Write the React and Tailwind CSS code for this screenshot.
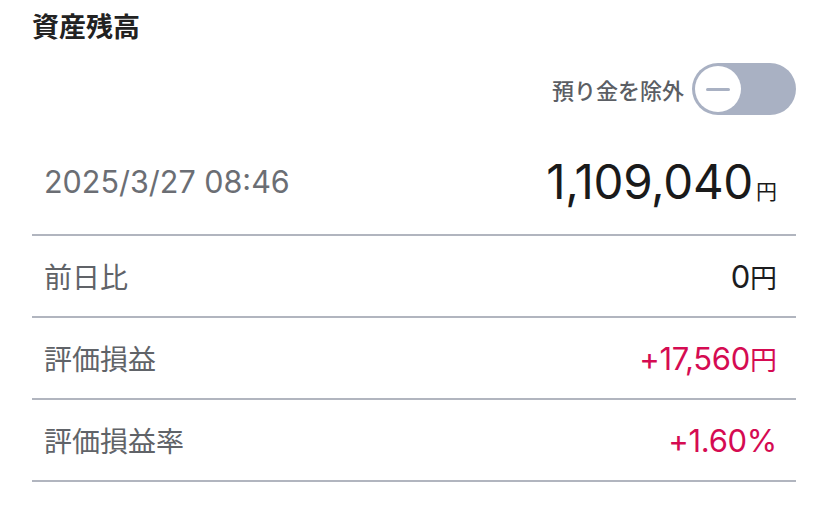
import React from "react";

const FONT = { fontFamily: '"Noto Sans CJK JP", "Noto Sans", sans-serif' };
const NUM = { fontFamily: 'Inter, "Noto Sans CJK JP", sans-serif' };

const rows = [
  { label: "前日比", value: "0", unit: "円", tone: "text-[#1c1c1e]" },
  { label: "評価損益", value: "+17,560", unit: "円", tone: "text-[#d50b52]" },
  { label: "評価損益率", value: "+1.60%", unit: "", tone: "text-[#d50b52]" },
];

function Toggle() {
  return (
    <div className="w-[104px] h-[52px] rounded-full bg-[#a9b1c3] p-[3px] flex items-center">
      <div className="w-[46px] h-[46px] rounded-full bg-white flex items-center justify-center">
        <div className="w-[24px] h-[3px] rounded-full bg-[#a9b1c3]" />
      </div>
    </div>
  );
}

export default function App() {
  return (
    <div className="w-[828px] h-[515px] bg-white px-[32px] overflow-hidden" style={FONT}>
      {/* heading */}
      <div className="h-[50px] flex items-center">
        <h1 className="text-[27px] font-bold leading-none text-[#222]">資産残高</h1>
      </div>

      {/* exclude deposits switch */}
      <div className="mt-[13px] flex items-center justify-end gap-[8px]">
        <span className="text-[22px] font-medium text-[#5b5e64] leading-none">預り金を除外</span>
        <Toggle />
      </div>

      {/* total */}
      <div className="mt-[15px] h-[106px] border-b-2 border-[#b1b5bf] flex items-center justify-between pl-[12px] pr-[19px]">
        <span className="text-[30.5px] text-[#6b6e74] leading-none" style={NUM}>
          2025/3/27 08:46
        </span>
        <span className="flex items-baseline text-[#1a1a1a] leading-none">
          <span className="text-[47.5px] tracking-[-0.3px]" style={NUM}>1,109,040</span>
          <span className="text-[21px] ml-[3px]">円</span>
        </span>
      </div>

      {rows.map((r) => (
        <div
          key={r.label}
          className="h-[82px] border-b-2 border-[#b1b5bf] flex items-center justify-between pl-[12px] pr-[19px]"
        >
          <span className="text-[28px] text-[#606368] leading-none">{r.label}</span>
          <span className={`flex items-baseline leading-none ${r.tone}`}>
            <span className="text-[31px] tracking-[-0.3px]" style={NUM}>{r.value}</span>
            {r.unit && <span className="text-[27px]">{r.unit}</span>}
          </span>
        </div>
      ))}
    </div>
  );
}
